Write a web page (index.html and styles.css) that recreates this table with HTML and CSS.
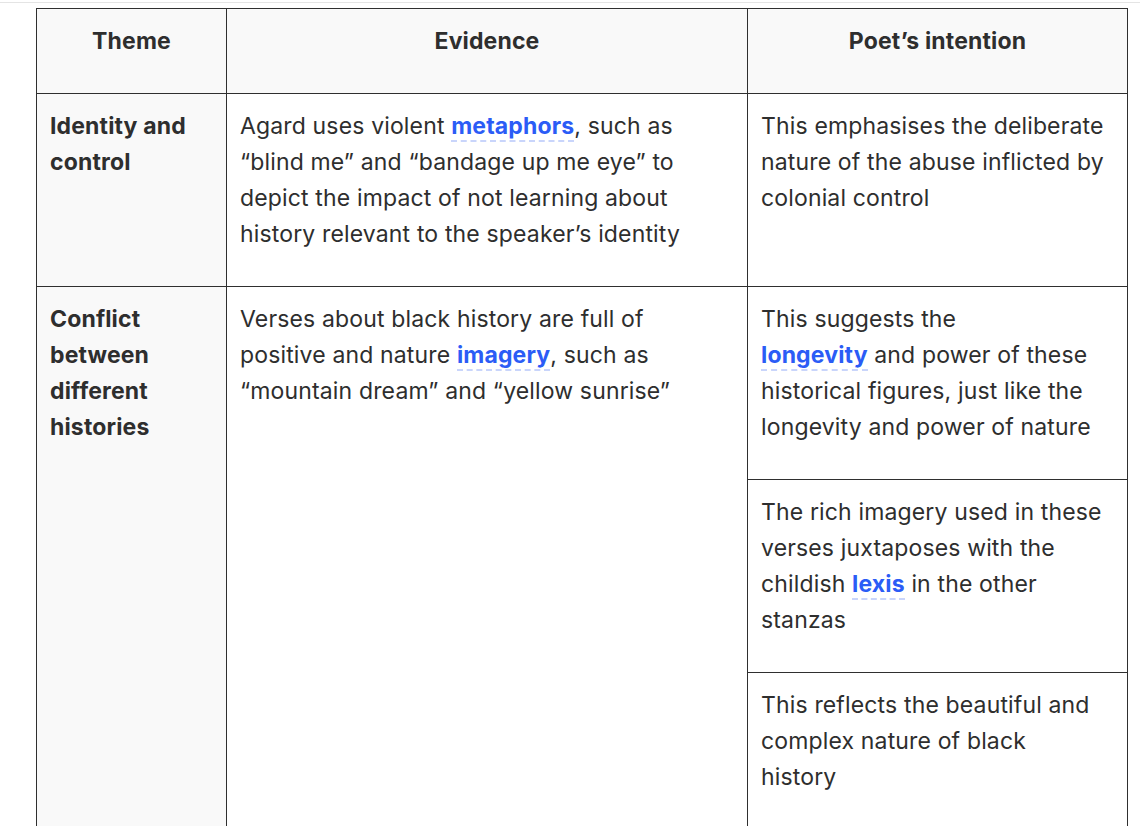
FILE: index.html
```html
<!DOCTYPE html>
<html lang="en">
<head>
<meta charset="utf-8">
<link rel="stylesheet" href="styles.css">
<title>Theme table</title>
</head>
<body>
<div class="topline"></div>
<div class="wrap">
  <table class="themes">
    <colgroup>
      <col class="c-theme">
      <col class="c-evidence">
      <col class="c-intent">
    </colgroup>
    <thead>
      <tr>
        <th class="theme">Theme</th>
        <th>Evidence</th>
        <th>Poet’s intention</th>
      </tr>
    </thead>
    <tbody>
      <tr>
        <th class="theme row">Identity and control</th>
        <td>Agard uses violent <a class="gloss" href="#">metaphors</a>, such as “blind me” and “bandage up me eye” to depict the impact of not learning about history relevant to the speaker’s identity</td>
        <td>This emphasises the deliberate nature of the abuse inflicted by colonial control</td>
      </tr>
      <tr>
        <th class="theme row" rowspan="3">Conflict between different histories</th>
        <td rowspan="3">Verses about black history are full of positive and nature <a class="gloss" href="#">imagery</a>, such as “mountain dream” and “yellow sunrise”</td>
        <td>This suggests the<br><a class="gloss" href="#">longevity</a> and power of these historical figures, just like the longevity and power of nature</td>
      </tr>
      <tr>
        <td>The rich imagery used in these verses juxtaposes with the childish <a class="gloss" href="#">lexis</a> in the other stanzas</td>
      </tr>
      <tr>
        <td>This reflects the beautiful and complex nature of black history</td>
      </tr>
    </tbody>
  </table>
</div>
</body>
</html>
```

FILE: styles.css
```css
html, body {
  margin: 0;
  padding: 0;
  background: #ffffff;
}

body {
  font-family: Inter, "Noto Sans", sans-serif;
  color: #2e2e2e;
}

.topline {
  margin-top: 2px;
  height: 1px;
  background: #e4e4e4;
}

.wrap {
  padding: 5px 0 0 36px;
}

.themes {
  border-collapse: collapse;
  width: 1091px;
  table-layout: fixed;
  font-size: 23px;
  line-height: 36px;
  letter-spacing: 0.15px;
}

.c-theme { width: 190px; }
.c-evidence { width: 521px; }
.c-intent { width: 380px; }

.themes th,
.themes td {
  border: 1px solid #2f2f2f;
  padding: 14px 20px 34px 13px;
  vertical-align: top;
  text-align: left;
  font-weight: 400;
  background: #ffffff;
}

.themes thead th {
  background: #f9f9f9;
  font-weight: 700;
  text-align: center;
  padding-right: 13px;
}

.themes th.row {
  background: #f9f9f9;
  font-weight: 700;
}

.gloss {
  color: #2b5cf6;
  font-weight: 700;
  text-decoration: none;
  border-bottom: 2px dashed #c9d5fb;
}
```
